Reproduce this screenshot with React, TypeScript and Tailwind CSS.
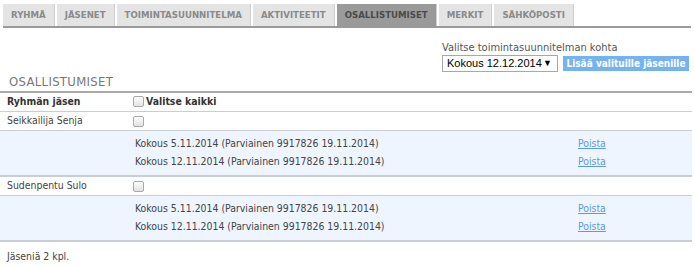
import React from "react";

const tabs = [
    "Ryhmä",
    "Jäsenet",
    "Toimintasuunnitelma",
    "Aktiviteetit",
    "Osallistumiset",
    "Merkit",
    "Sähköposti",
];

const members = [
    {
        name: "Seikkailija Senja",
        events: [
            "Kokous 5.11.2014 (Parviainen 9917826 19.11.2014)",
            "Kokous 12.11.2014 (Parviainen 9917826 19.11.2014)",
        ],
    },
    {
        name: "Sudenpentu Sulo",
        events: [
            "Kokous 5.11.2014 (Parviainen 9917826 19.11.2014)",
            "Kokous 12.11.2014 (Parviainen 9917826 19.11.2014)",
        ],
    },
];

function Checkbox() {
    return (
        <span className="inline-block w-[11px] h-[11px] rounded-[2px] border border-[#a9a9a9] bg-gradient-to-b from-[#fdfdfd] to-[#e2e2e2]" />
    );
}

export default function App() {
    return (
        <div className="w-[694px] h-[266px] bg-white text-[10.4px] text-[#444] font-['DejaVu_Sans',sans-serif] font-stretch-condensed">
            {/* Tabs */}
            <div className="pt-[4px] px-[3px]">
                <div className="flex gap-[2px] border-b-2 border-[#9a9a9a]">
                    {tabs.map((t) => (
                        <div
                            key={t}
                            className={`h-[22px] px-[8px] flex items-center uppercase font-bold text-[8.6px] font-stretch-normal border-r border-[#cfcfcf] ${t === "Osallistumiset"
                                ? "bg-[#9a9a9a] text-[#4a4a4a]"
                                : "bg-[#e4e4e4] text-[#8a8a8a]"
                                }`}
                        >
                            {t}
                        </div>
                    ))}
                </div>
            </div>

            {/* Selection */}
            <div className="flex justify-end pr-[5px] pt-[13px]">
                <div className="w-[247px]">
                    <div className="text-[11px] text-[#555] leading-[13px]">Valitse toimintasuunnitelman kohta</div>
                    <div className="flex items-center gap-[5px] mt-[1px]">
                        <div className="w-[116px] h-[17px] border border-[#a8a8a8] flex items-center justify-between pl-[4px] pr-[5px] text-[11px] text-black bg-white whitespace-nowrap font-['Liberation_Sans',sans-serif]">
                            <span>Kokous 12.12.2014</span>
                            <span className="text-[9px]">▼</span>
                        </div>
                        <div className="w-[126px] h-[15px] bg-[#74b3f0] text-white font-bold text-[10px] flex items-center justify-center whitespace-nowrap">
                            Lisää valituille jäsenille
                        </div>
                    </div>
                </div>
            </div>

            <div className="pl-[9px] mt-[3px] text-[13px] text-[#777] uppercase leading-[14px] tracking-[0.3px]">Osallistumiset</div>

            {/* Table */}
            <div className="mt-[2px] mr-[2px] border-t-2 border-[#a9a9a9]">
                <div className="grid grid-cols-[133px_445px_1fr] h-[19px] items-center border-b border-[#c9cdd4] font-bold text-[#333]">
                    <div className="pl-[7px]">Ryhmän jäsen</div>
                    <div className="flex items-center gap-[2px]">
                        <Checkbox />
                        <span>Valitse kaikki</span>
                    </div>
                    <div />
                </div>
                {members.map((m) => (
                    <div key={m.name}>
                        <div className="grid grid-cols-[133px_445px_1fr] h-[19px] items-center border-b border-[#c9cdd4]">
                            <div className="pl-[7px]">{m.name}</div>
                            <div className="flex items-center">
                                <Checkbox />
                            </div>
                            <div />
                        </div>
                        <div className="bg-[#eef5fe] border-b-2 border-[#c9cdd4] py-[4px]">
                            {m.events.map((e) => (
                                <div key={e} className="grid grid-cols-[135px_443px_1fr] h-[18px] items-center">
                                    <div />
                                    <div>{e}</div>
                                    <div>
                                        <span className="text-[#5a9ae6] underline">Poista</span>
                                    </div>
                                </div>
                            ))}
                        </div>
                    </div>
                ))}
            </div>

            <div className="pl-[7px] mt-[7px]">Jäseniä 2 kpl.</div>
        </div>
    );
}
